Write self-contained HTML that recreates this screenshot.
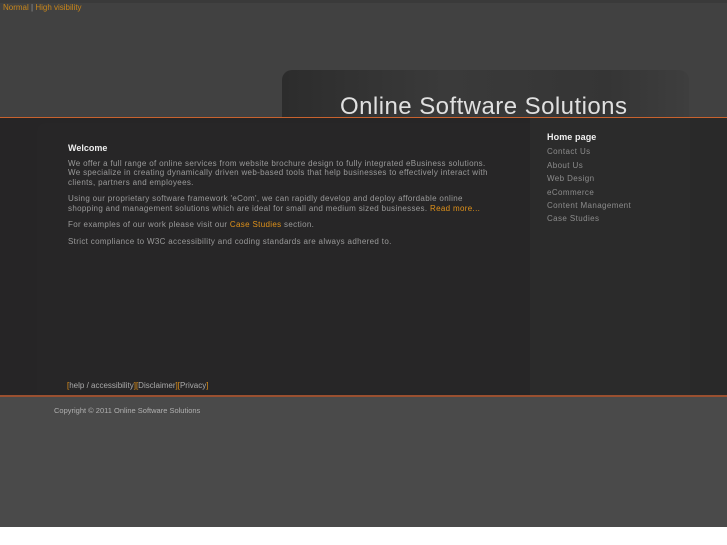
<!DOCTYPE html>
<html><head><meta charset="utf-8"><style>
*{margin:0;padding:0}
body{width:727px;height:545px;background:#fff;font-family:"Liberation Sans",sans-serif;position:relative;overflow:hidden}
#top{position:absolute;left:0;top:0;width:727px;height:118px;background:#414141}
#top .bar{position:absolute;left:0;top:0;width:727px;height:3px;background:#3a3a3a}
#acc{position:absolute;left:3px;top:3px;font-size:8px;color:#c8861a}
#acc span{color:#999}
#hdr{position:absolute;left:282px;top:70px;width:407px;height:48px;border-radius:10px 10px 0 0;background:linear-gradient(90deg,#2c2c2c,#3a3a3a 40%,#353535 80%,#3e3e3e)}
#title{position:absolute;left:340px;top:93px;font-size:24px;color:#e0e0e0;font-weight:300;letter-spacing:0.45px;z-index:3}
#line1{position:absolute;left:0;top:117px;width:727px;height:0;border-top:1px solid #c8622e;z-index:5}
#main{position:absolute;left:0;top:118px;width:727px;height:277px;background:#262526}
#box{position:absolute;left:37px;top:123px;width:493px;height:270px;background:#272627;border-radius:8px 0 0 0}
#side{position:absolute;left:530px;top:118px;width:160px;height:277px;background:#2b2b2b}
#side2{position:absolute;left:690px;top:118px;width:37px;height:277px;background:#292929}
#content{position:absolute;left:68px;top:144px;width:460px;font-size:8px;line-height:9.5px;color:#9a9a9a;letter-spacing:0.33px}
#content h1{font-size:9px;color:#eee;margin-bottom:5px;letter-spacing:0}
#content p{margin-bottom:7px}
.o{color:#e0921a}
#menu{position:absolute;left:547px;top:131px;font-size:8px;color:#8c8c8c;line-height:13.4px;letter-spacing:0.4px}
#menu b{color:#f0f0f0;font-size:9px;display:block;margin-bottom:1px;letter-spacing:0.1px}
#links{position:absolute;left:67px;top:381px;font-size:8px;color:#aaa}
#line2{position:absolute;left:0;top:395px;width:727px;height:2px;background:#9a5030}
#foot{position:absolute;left:0;top:397px;width:727px;height:130px;background:#4a4a4a}
#copy{position:absolute;left:54px;top:406px;font-size:7.5px;color:#b0b0b0}
</style></head><body>
<div id="top"><div class="bar"></div></div>
<div id="acc">Normal <span>|</span> High visibility</div>
<div id="hdr"></div>
<div id="main"></div>
<div id="box"></div>
<div id="side"></div>
<div id="side2"></div>
<div id="line1"></div>
<div id="title">Online Software Solutions</div>
<div id="content">
<h1>Welcome</h1>
<p>We offer a full range of online services from website brochure design to fully integrated eBusiness solutions.<br>We specialize in creating dynamically driven web-based tools that help businesses to effectively interact with<br>clients, partners and employees.</p>
<p>Using our proprietary software framework 'eCom', we can rapidly develop and deploy affordable online<br>shopping and management solutions which are ideal for small and medium sized businesses. <span class="o">Read more...</span></p>
<p>For examples of our work please visit our <span class="o">Case Studies</span> section.</p>
<p>Strict compliance to W3C accessibility and coding standards are always adhered to.</p>
</div>
<div id="menu"><b>Home page</b>Contact Us<br>About Us<br>Web Design<br>eCommerce<br>Content Management<br>Case Studies</div>
<div id="links"><span class="o">[</span>help / accessibility<span class="o">][</span>Disclaimer<span class="o">][</span>Privacy<span class="o">]</span></div>
<div id="line2"></div>
<div id="foot"></div>
<div id="copy">Copyright © 2011 Online Software Solutions</div>
</body></html>
